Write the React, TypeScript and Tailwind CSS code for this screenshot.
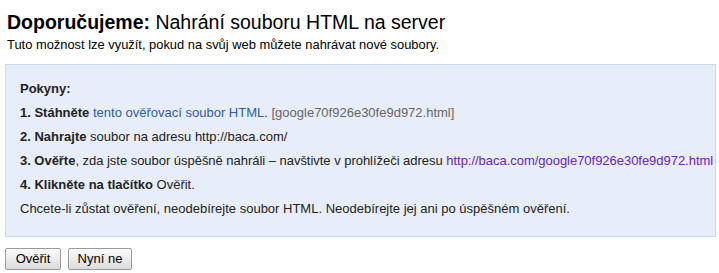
import React from "react";

export default function App() {
  return (
    <div className="w-[719px] h-[273px] bg-white text-[#222] font-['Liberation_Sans',Arial,sans-serif] overflow-hidden">
      <div className="pl-[7px] pt-[9px]">
        <h1 className="text-[19.5px] leading-[26px] text-black">
          <span className="font-bold">Doporučujeme:</span> Nahrání souboru HTML na server
        </h1>
        <p className="mt-[2px] text-[12.9px] leading-[16px] text-black">
          Tuto možnost lze využít, pokud na svůj web můžete nahrávat nové soubory.
        </p>
      </div>
      <div className="ml-[5px] mt-[11px] w-[711px] h-[173px] bg-[#e8eef9] border border-[#c9d7f1] pl-[14px] pt-[12px] text-[13px] leading-[24px] text-[#222]">
        <div className="font-bold">Pokyny:</div>
        <div>
          <b>1. Stáhněte</b> <span className="text-[#2a5db0]">tento ověřovací soubor HTML</span>.{" "}
          <span className="text-[#666]">[google70f926e30fe9d972.html]</span>
        </div>
        <div>
          <b>2. Nahrajte</b> soubor na adresu http://baca.com/
        </div>
        <div className="whitespace-nowrap tracking-[-0.03px]">
          <b>3. Ověřte</b>, zda jste soubor úspěšně nahráli – navštivte v prohlížeči adresu{" "}
          <span className="text-[#6a22c4]">http://baca.com/google70f926e30fe9d972.html</span>
        </div>
        <div>
          <b>4. Klikněte na tlačítko</b> Ověřit.
        </div>
        <div>Chcete-li zůstat ověření, neodebírejte soubor HTML. Neodebírejte jej ani po úspěšném ověření.</div>
      </div>
      <div className="flex gap-[7px] ml-[5px] mt-[11px]">
        <button className="h-[22px] w-[56px] rounded-[2px] border border-[#9a9a9a] bg-gradient-to-b from-[#fbfbfb] to-[#dcdcdc] text-[13px] text-black">
          Ověřit
        </button>
        <button className="h-[22px] w-[64px] rounded-[2px] border border-[#9a9a9a] bg-gradient-to-b from-[#fbfbfb] to-[#dcdcdc] text-[13px] text-black">
          Nyní ne
        </button>
      </div>
    </div>
  );
}
